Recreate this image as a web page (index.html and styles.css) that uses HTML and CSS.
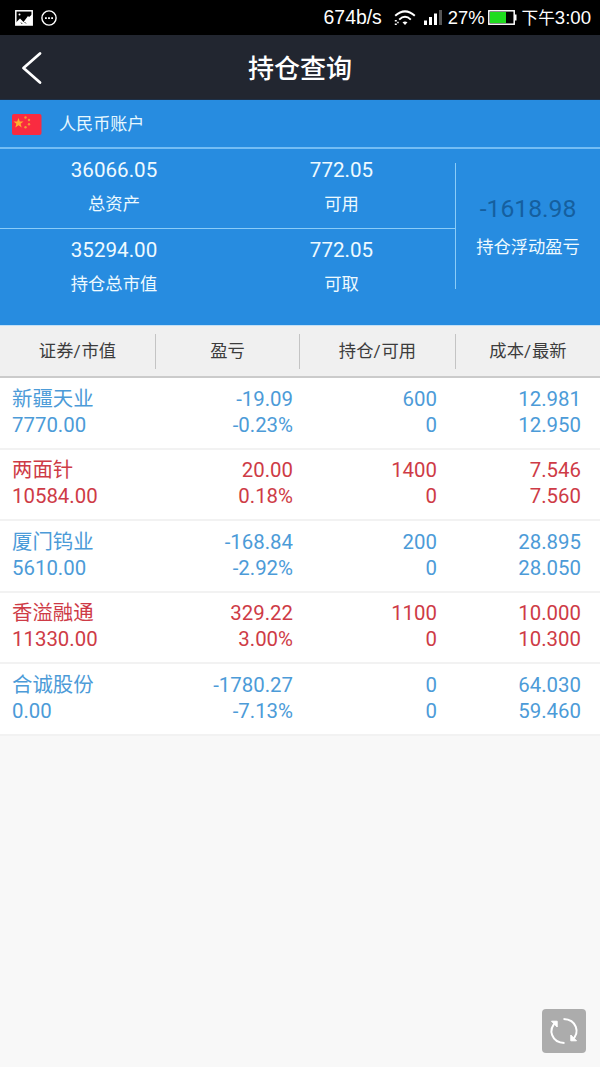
FILE: index.html
```
<!DOCTYPE html>
<html lang="zh-CN">
<head>
    <meta charset="UTF-8">
    <meta name="viewport" content="width=device-width, initial-scale=1.0">
    <title>持仓查询</title>
    <link rel="stylesheet" href="styles.css">
</head>
<body>

    <div class="status">
        <div class="status-left">
            <svg width="18" height="16" viewBox="0 0 18 16">
                <rect x="0.8" y="0.8" width="16.4" height="14.2" fill="none" stroke="#fff" stroke-width="1.5"/>
                <path d="M1 12.5L5 8.5L8.5 12L13 6L14 7L17 4.5V15H1Z" fill="#fff"/>
                <path d="M6 12.5l1.2 1.5M9.5 12l1.5 1.5" stroke="#000" stroke-width="0.8"/>
                <circle cx="4.5" cy="4.5" r="1" fill="#fff"/>
            </svg>
            <svg width="16" height="16" viewBox="0 0 16 16">
                <circle cx="8" cy="8" r="7.1" fill="none" stroke="#fff" stroke-width="1.4"/>
                <path d="M4 7.2h1.8v1.8H4zM7.1 7.2h1.8v1.8H7.1zM10.2 7.2H12v1.8h-1.8z" fill="#fff"/>
            </svg>
        </div>
        <div class="status-right">
            <span class="speed">674b/s</span>
            <svg class="wifi" width="22" height="16" viewBox="0 0 22 16">
                <path d="M1.2 5.8Q11-3 20.8 5.8M5.2 9.6Q11 4 16.8 9.6" fill="none" stroke="#fff" stroke-width="2"/>
                <path d="M8.5 12.2Q11 10.6 13.5 12.2L11 15Z" fill="#fff"/>
                <path d="M0.8 10h2v1.5h-2zM0.8 13.5h2V15h-2zM3.2 11.8h1.5v1.5H3.2z" fill="#fff"/>
            </svg>
            <svg class="signal" width="18" height="15" viewBox="0 0 18 15">
                <path d="M0 10.5h3V15H0zM5 7h3v8H5zM10 3.5h3V15h-3z" fill="#fff"/>
                <path d="M15 0h3v15h-3z" fill="#555"/>
            </svg>
            <span class="percent">27%</span>
            <svg class="battery" width="29" height="15" viewBox="0 0 29 15">
                <rect x="0.8" y="0.8" width="25.4" height="13.4" fill="none" stroke="#fff" stroke-width="1.5"/>
                <rect x="2" y="2" width="16" height="11" fill="#1fdc1f"/>
                <rect x="26.5" y="4.5" width="2" height="6" fill="#fff"/>
            </svg>
            <span class="time"><span class="noon">下午</span>3:00</span>
        </div>
    </div>

    <div class="nav">
        <svg class="back" width="22" height="34" viewBox="0 0 22 34">
            <path d="M19 2.5L2.5 17L19 31.5" fill="none" stroke="#fff" stroke-width="2.8" stroke-linecap="round" stroke-linejoin="round"/>
        </svg>
        <div class="title">持仓查询</div>
    </div>

    <div class="account">
        <svg width="30" height="21" viewBox="0 0 30 21">
            <rect width="29.5" height="21" rx="2" fill="#f92b40"/>
            <path d="M6.5 4L7.8 7.5H11.5L8.6 9.8L9.7 13.5L6.5 11.3L3.3 13.5L4.4 9.8L1.5 7.5H5.2Z" fill="#ffb02e"/>
            <g fill="#f59a35">
                <circle cx="13.5" cy="3.5" r="1.2"/>
                <circle cx="17" cy="6" r="1.2"/>
                <circle cx="17" cy="10.3" r="1.2"/>
                <circle cx="13.5" cy="13.3" r="1.2"/>
            </g>
        </svg>
        <span>人民币账户</span>
    </div>

    <div class="summary">
        <div class="totals">
            <div class="total"><b>36066.05</b><p>总资产</p></div>
            <div class="total"><b>772.05</b><p>可用</p></div>
            <div class="total"><b>35294.00</b><p>持仓总市值</p></div>
            <div class="total"><b>772.05</b><p>可取</p></div>
        </div>
        <div class="profit">
            <b>-1618.98</b>
            <p>持仓浮动盈亏</p>
        </div>
    </div>

    <div class="thead">
        <div>证券<i>/</i>市值</div>
        <div>盈亏</div>
        <div>持仓<i>/</i>可用</div>
        <div>成本<i>/</i>最新</div>
    </div>

    <div class="list">
        <div class="row down">
            <div>新疆天业<br>7770.00</div>
            <div>-19.09<br>-0.23%</div>
            <div>600<br>0</div>
            <div>12.981<br>12.950</div>
        </div>
        <div class="row up">
            <div>两面针<br>10584.00</div>
            <div>20.00<br>0.18%</div>
            <div>1400<br>0</div>
            <div>7.546<br>7.560</div>
        </div>
        <div class="row down">
            <div>厦门钨业<br>5610.00</div>
            <div>-168.84<br>-2.92%</div>
            <div>200<br>0</div>
            <div>28.895<br>28.050</div>
        </div>
        <div class="row up">
            <div>香溢融通<br>11330.00</div>
            <div>329.22<br>3.00%</div>
            <div>1100<br>0</div>
            <div>10.000<br>10.300</div>
        </div>
        <div class="row down">
            <div>合诚股份<br>0.00</div>
            <div>-1780.27<br>-7.13%</div>
            <div>0<br>0</div>
            <div>64.030<br>59.460</div>
        </div>
    </div>

    <button class="refresh">
        <svg width="44" height="44" viewBox="0 0 44 44" fill="none" stroke="#fff" stroke-width="2">
            <path d="M22.5 34C9.5 33.5 5.5 20.5 14 13M21.5 10C34.5 10.5 38.5 23.5 30 31"/>
            <path d="M9.5 12.2H15.2V18ZM34.5 31.8H28.8V26Z" fill="#fff" stroke-width="1"/>
        </svg>
    </button>

</body>
</html>
```
FILE: styles.css
```
*{
    margin: 0px;
    padding: 0px;
    box-sizing: border-box;
}
body{
    min-height: 1067px;
    background-color: #f8f8f8;
    font-family: Roboto, "Noto Sans CJK SC", sans-serif;
    font-size: 17.3px;
}
b{
    font-weight: normal;
}
.status{
    display: flex;
    justify-content: space-between;
    height: 35px;
    padding: 0 9px 0 15px;
    background-color: #000;
    color: #fff;
    font-family: "Liberation Sans", "Noto Sans CJK SC", sans-serif;
    font-size: 19px;
}
.status-left, .status-right{
    display: flex;
    align-items: center;
}
.status-left{
    gap: 8px;
}
.status-right{
    line-height: 35px;
}
.speed{
    font-size: 19.4px;
}
.wifi{
    margin-left: 12px;
}
.signal{
    margin: 0 6px 0 8px;
}
.percent{
    font-size: 18.4px;
}
.battery{
    margin: 0 5px 0 3px;
}
.time{
    font-size: 18.6px;
}
.noon{
    font-size: 16.6px;
}
.nav{
    display: grid;
    grid-template-columns: 60px 1fr 60px;
    align-items: center;
    height: 65px;
    background-color: #222630;
    border-bottom: 1px solid #1d3048;
    color: #fff;
}
.back{
    margin: 2px 0 0 21px;
}
.title{
    padding-bottom: 2px;
    font-size: 26px;
    font-weight: 500;
    text-align: center;
}
.account{
    display: flex;
    align-items: center;
    gap: 17px;
    height: 49px;
    padding: 1px 0 0 12px;
    background-color: #278ce0;
    border-bottom: 2px solid #74bdf4;
    color: #e6f8ff;
}
.account span{
    padding-bottom: 3px;
    font-size: 17.1px;
}
.summary{
    display: flex;
    height: 177px;
    background-color: #278ce0;
    border-bottom: 1px solid #c3e0f6;
    color: #eefaff;
    text-align: center;
}
.totals{
    display: grid;
    grid-template-columns: 228px 227px;
    grid-template-rows: 80px 80px;
}
.total{
    padding-top: 9px;
    line-height: 24px;
}
.total:nth-child(-n+2){
    border-bottom: 1px solid #8accf8;
}
.total b{
    font-size: 20.6px;
}
.total p{
    margin-top: 9px;
}
.profit{
    flex: 1;
    height: 126px;
    margin-top: 14px;
    padding-top: 30px;
    border-left: 1px solid #8accf8;
    line-height: 32px;
}
.profit b{
    font-size: 24.7px;
    color: #155f9f;
}
.profit p{
    margin-top: 4px;
    line-height: 32px;
}
.thead{
    display: grid;
    grid-template-columns: 156px 144px 156px 144px;
    height: 52px;
    padding: 8px 0;
    background-color: #f0f0f0;
    border-bottom: 2px solid #cbcbcb;
    color: #3c3c3c;
    text-align: center;
    line-height: 35px;
}
.thead div{
    height: 35px;
    border-right: 1px solid #c4c4c4;
}
.thead div:last-child{
    border-right: none;
}
.thead i{
    font-style: normal;
    padding-right: 1px;
}
.row{
    display: grid;
    grid-template-columns: 140px 141px 144px 144px;
    height: 71.5px;
    padding: 7.5px 0 0 12px;
    background-color: #fff;
    border-bottom: 2px solid #f2f2f2;
    font-size: 20.4px;
    line-height: 26.4px;
    text-align: right;
}
.row div:first-child{
    text-align: left;
}
.down{
    color: #4c9bd8;
}
.up{
    color: #ce3b46;
}
.refresh{
    position: fixed;
    right: 14px;
    bottom: 14px;
    width: 44px;
    height: 44px;
    border: none;
    border-radius: 4px;
    background-color: #acacac;
}
```
